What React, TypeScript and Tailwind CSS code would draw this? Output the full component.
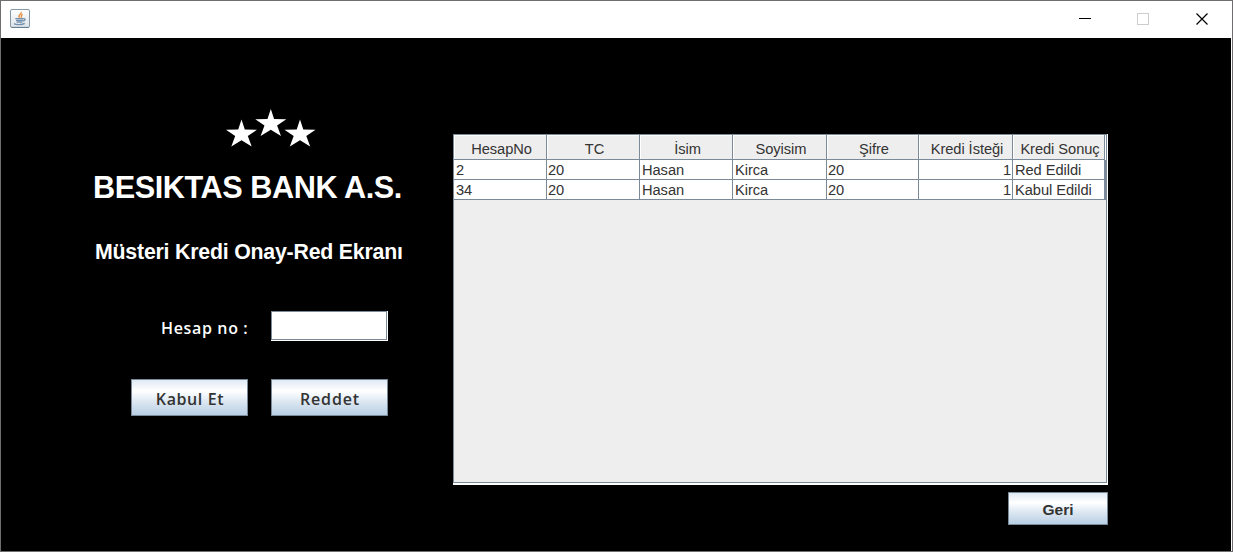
import React from "react";

const STAR = "15.5,0 18.8,10 31,10.3 21.8,16.4 25.7,27 15.5,20.8 5.3,27 9.2,16.4 0,10.3 12.2,10";

type Column = { title: string; width: string; align: string; values: string[] };

const COLUMNS: Column[] = [
  { title: "HesapNo", width: "w-[93px]", align: "justify-start pl-0.5", values: ["2", "34"] },
  { title: "TC", width: "w-[93px]", align: "justify-start pl-px", values: ["20", "20"] },
  { title: "İsim", width: "w-[93px]", align: "justify-start pl-0.5", values: ["Hasan", "Hasan"] },
  { title: "Soyisim", width: "w-[94px]", align: "justify-start pl-0.5", values: ["Kirca", "Kirca"] },
  { title: "Şifre", width: "w-[92px]", align: "justify-start pl-px", values: ["20", "20"] },
  { title: "Kredi İsteği", width: "w-[94px]", align: "justify-end", values: ["1", "1"] },
  { title: "Kredi Sonuç", width: "w-[92px]", align: "justify-start pl-0.5", values: ["Red Edildi", "Kabul Edildi"] },
];

function JavaIcon() {
  return (
    <svg width="20" height="20" viewBox="0 0 20 20" fill="none">
      <defs>
        <linearGradient id="tile" x1="0" y1="0" x2="0" y2="1">
          <stop offset="0" stopColor="#ffffff" />
          <stop offset="1" stopColor="#dce3e8" />
        </linearGradient>
      </defs>
      <rect x="0.5" y="0.5" width="19" height="18" rx="1.5" fill="url(#tile)" stroke="#8498a6" />
      <path d="M1.5 18.4h17" stroke="#5f7b8c" />
      <path d="M11 3c1.4 2-4 2.8-1.4 5.8M12.6 5.3c-2.5 1.2-.2 2-1.6 3.5" stroke="#e8984e" strokeWidth="1.5" />
      <path d="M5.3 9.6h8.2M6 11.3h7M6.6 13h5.8M13.5 9.8c2.6-.4 2 2-.6 2.3M4 14.6c2 1.4 8.5 1.3 10.7-.2" stroke="#7391ae" strokeWidth="1.3" />
    </svg>
  );
}

function MetalButton({ children, className }: { children: React.ReactNode; className: string }) {
  return (
    <button
      className={`flex items-center justify-center border border-[#7a8a99] bg-[linear-gradient(180deg,#dfe9f4_0%,#ffffff_30%,#fafcfe_36%,#dce7f1_62%,#b8cfe5_100%)] text-[#333333] ${className}`}
    >
      {children}
    </button>
  );
}

function CreditTable() {
  return (
    <div className="h-[351px] w-[655px] border-r border-b-2 border-white">
      <div className="flex h-[349px] border border-[#7a8a99] bg-[#eeeeee] font-['Liberation_Sans',sans-serif] text-[14.67px] tracking-[-0.06px] text-[#333333]">
        {COLUMNS.map((column) => (
          <div key={column.title} className={`shrink-0 ${column.width}`}>
            <div className="flex h-[25px] items-center justify-center border-r border-b border-[#7a8a99] pt-[3px] pl-[3px] whitespace-nowrap shadow-[inset_1px_1px_0_#ffffff]">
              {column.title}
            </div>
            {column.values.map((value, row) => (
              <div
                key={row}
                className={`flex h-5 items-center border-r border-b border-[#7a8a99] bg-white pr-px whitespace-nowrap ${column.align}`}
              >
                {value}
              </div>
            ))}
          </div>
        ))}
        <div className="w-px">
          <div className="h-[25px] bg-white" />
          <div className="h-10 bg-[#7a8a99]" />
        </div>
      </div>
    </div>
  );
}

export default function App() {
  return (
    <div className="flex h-[552px] w-[1233px] flex-col overflow-hidden border border-[#6f6d6f] bg-white">
      <header className="flex h-[37px] shrink-0 items-start justify-between pr-[23px] pl-[9px]">
        <div className="pt-2">
          <JavaIcon />
        </div>
        <svg width="130" height="12" viewBox="0 0 130 12" className="mt-3" fill="none" shapeRendering="crispEdges">
          <path d="M0 5.5h12" stroke="#000000" />
          <rect x="58.5" y="0.5" width="11" height="11" stroke="#cccccc" />
          <path d="M117.5 0.5l11 11M128.5 0.5l-11 11" stroke="#000000" strokeWidth="1.2" shapeRendering="auto" />
        </svg>
      </header>
      <main className="mr-px flex grow items-start bg-black pl-[92px]">
        <section className="w-[360px] pt-[71px] text-white">
          <svg width="90" height="38" viewBox="0 0 90 38" className="ml-[133px]" fill="#ffffff">
            <polygon points={STAR} transform="translate(0 10.5)" />
            <polygon points={STAR} transform="translate(29.3 0)" />
            <polygon points={STAR} transform="translate(58.5 10.5)" />
          </svg>
          <h1 className="mt-[22px] h-9 w-[320px] font-['Liberation_Sans',sans-serif] text-[30.67px] leading-9 font-bold tracking-[-0.44px] whitespace-nowrap">
            BESIKTAS BANK A.S.
          </h1>
          <h2 className="mt-[33px] ml-0.5 h-7 w-[308px] font-['Liberation_Sans',sans-serif] text-[21.33px] leading-7 font-bold tracking-[-0.22px] whitespace-nowrap">
            Müsteri Kredi Onay-Red Ekranı
          </h2>
          <div className="mt-[45px] flex h-[30px] items-center">
            <label htmlFor="account" className="w-[178px] pt-1 pl-[68px] font-['Open_Sans',sans-serif] text-[16px] font-semibold tracking-[0.65px] whitespace-nowrap">
              Hesap no :
            </label>
            <div className="h-[30px] w-[117px] border-r border-b border-white">
              <input id="account" className="block h-[29px] w-[116px] border border-[#7a8a99] bg-white px-1 text-black outline-none" />
            </div>
          </div>
          <div className="mt-[38px] ml-[38px] flex gap-[23px] font-['Open_Sans',sans-serif] text-[16px] font-semibold">
            <MetalButton className="h-[37px] w-[117px] pt-[3px] pl-px tracking-[0.6px]">Kabul Et</MetalButton>
            <MetalButton className="h-[37px] w-[117px] pt-[3px] pl-px tracking-[0.85px]">Reddet</MetalButton>
          </div>
        </section>
        <section className="flex flex-col items-end gap-[7px] pt-[96px]">
          <CreditTable />
          <MetalButton className="h-[33px] w-[100px] pt-0.5 font-['Liberation_Sans',sans-serif] text-[15.5px] font-bold">Geri</MetalButton>
        </section>
      </main>
    </div>
  );
}
